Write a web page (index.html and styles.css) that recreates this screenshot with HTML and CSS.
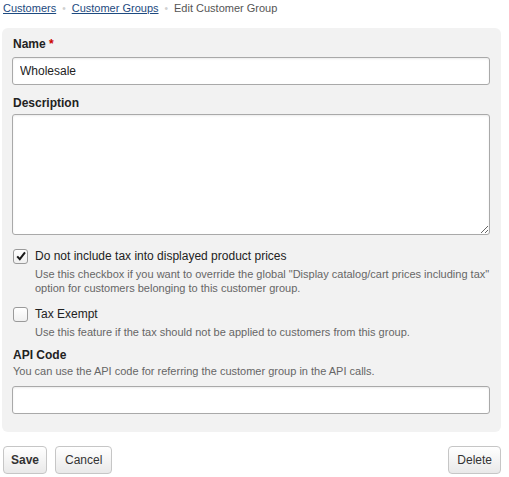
FILE: index.html
```html
<!DOCTYPE html>
<html>
<head>
<meta charset="utf-8">
<link rel="stylesheet" href="styles.css">
</head>
<body>
<div class="crumbs">
  <a href="#" class="crumb-link">Customers</a><span class="sep">•</span><a href="#" class="crumb-link">Customer Groups</a><span class="sep">•</span><span class="crumb-current">Edit Customer Group</span>
</div>
<form class="panel">
  <label class="label label-name">Name <span class="req">*</span></label>
  <input class="field" type="text" value="Wholesale">
  <label class="label label-desc">Description</label>
  <textarea class="area"></textarea>
  <div class="check-row check-first">
    <span class="box checked"><svg width="12" height="12" viewBox="0 0 12 12"><path d="M2.2 6.3 L4.8 9.2 L10 2.4" fill="none" stroke="#1a1a1a" stroke-width="2"/></svg></span>
    <span class="check-text">Do not include tax into displayed product prices</span>
  </div>
  <p class="help help-indent">Use this checkbox if you want to override the global "Display catalog/cart prices including tax" option for customers belonging to this customer group.</p>
  <div class="check-row check-second">
    <span class="box"></span>
    <span class="check-text">Tax Exempt</span>
  </div>
  <p class="help help-indent">Use this feature if the tax should not be applied to customers from this group.</p>
  <label class="label label-api">API Code</label>
  <p class="help help-api">You can use the API code for referring the customer group in the API calls.</p>
  <input class="field" type="text" value="">
</form>
<div class="actions">
  <div class="left-actions">
    <button class="btn btn-save" type="button">Save</button>
    <button class="btn btn-cancel" type="button">Cancel</button>
  </div>
  <button class="btn" type="button">Delete</button>
</div>
</body>
</html>
```
FILE: styles.css
```css
html, body {
  margin: 0;
  padding: 0;
  background: #fff;
}
body {
  font-family: "Liberation Sans", Arial, sans-serif;
  font-size: 12px;
  color: #333;
  width: 509px;
}
.crumbs {
  padding: 1px 3px 0 3px;
  height: 27px;
  line-height: 15px;
  color: #555;
  font-size: 11px;
}
.crumb-link {
  color: #1d4a80;
  text-decoration: underline;
}
.sep {
  color: #d0d0d0;
  margin: 0 6px;
  font-size: 10px;
}
.crumb-current {
  color: #555;
}
.panel {
  margin: 0 8px 0 2px;
  background: #f2f2f2;
  border-radius: 6px;
  padding: 8px 11px 18px 10px;
  display: flex;
  flex-direction: column;
}
.label {
  display: block;
  font-weight: bold;
  color: #222;
  line-height: 16px;
  margin-left: 1px;
}
.label-name {
  margin-bottom: 5px;
}
.req {
  color: #c00;
}
.label-desc {
  margin-top: 10px;
  margin-bottom: 3px;
}
.field {
  box-sizing: border-box;
  width: 100%;
  height: 28px;
  border: 1px solid #a9a9a9;
  border-radius: 3px;
  background: #fff;
  box-shadow: inset 0 1px 2px rgba(0,0,0,0.08);
  font-family: "Liberation Sans", Arial, sans-serif;
  font-size: 12px;
  color: #222;
  padding: 0 7px;
  margin: 0;
}
.area {
  box-sizing: border-box;
  width: 100%;
  height: 121px;
  border: 1px solid #a9a9a9;
  border-radius: 3px;
  background: #fff;
  box-shadow: inset 0 1px 2px rgba(0,0,0,0.08);
  margin: 0;
  resize: both;
}
.check-row {
  display: flex;
  align-items: center;
  gap: 7px;
  line-height: 16px;
  color: #222;
}
.check-first {
  margin-top: 13px;
}
.check-second {
  margin-top: 11px;
}
.box {
  box-sizing: border-box;
  width: 15px;
  height: 15px;
  border: 1px solid #9a9a9a;
  border-radius: 3px;
  background: linear-gradient(#fff, #f0f0f0);
  display: flex;
  align-items: center;
  justify-content: center;
  margin-left: 1px;
}
.help {
  margin: 0;
  font-size: 11px;
  line-height: 14px;
  color: #666;
}
.help-indent {
  margin-left: 23px;
  margin-top: 3px;
}
.label-api {
  margin-top: 8px;
}
.help-api {
  margin-left: 1px;
  margin-top: 1px;
  margin-bottom: 8px;
}
.actions {
  display: flex;
  justify-content: space-between;
  margin: 14px 8px 0 3px;
}
.left-actions {
  display: flex;
  gap: 8px;
}
.btn {
  height: 28px;
  border: 1px solid #c6c6c6;
  border-radius: 4px;
  background: linear-gradient(#ffffff, #e9e9e9);
  font-family: "Liberation Sans", Arial, sans-serif;
  font-size: 12px;
  color: #333;
  padding: 0 8px;
  cursor: pointer;
}
.btn-save {
  font-weight: bold;
  padding: 0 7px;
}
.btn-cancel {
  padding: 0 9px;
}
```
